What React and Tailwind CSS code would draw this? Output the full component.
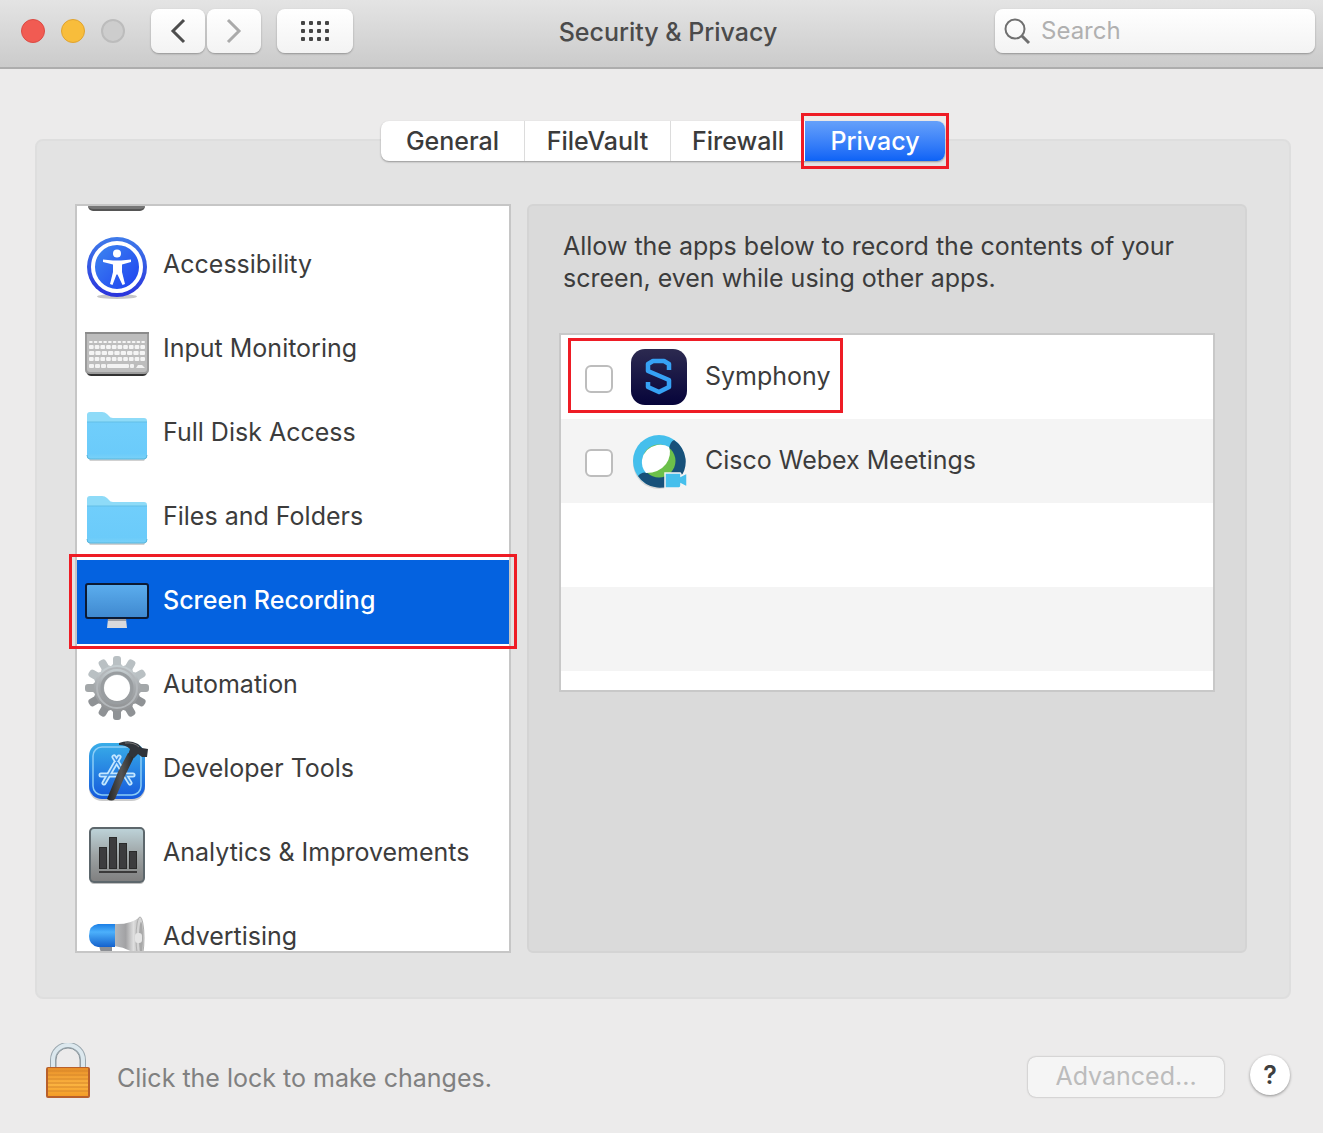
import React from "react";

function AccessibilityIcon() {
  return (
    <svg viewBox="0 0 64 64" className="size-16" aria-hidden="true">
      <defs>
        <linearGradient id="accOuter" x1="0" y1="0" x2="0" y2="1">
          <stop offset="0" stopColor="#3f7bea" />
          <stop offset="1" stopColor="#2a33dc" />
        </linearGradient>
        <linearGradient id="accInner" x1="0" y1="0" x2="1" y2="1">
          <stop offset="0" stopColor="#3f8af0" />
          <stop offset="1" stopColor="#1d3df0" />
        </linearGradient>
      </defs>
      <ellipse cx="32" cy="60.500" rx="20" ry="2.500" fill="#000" opacity=".22" />
      <circle cx="32" cy="31" r="30" fill="url(#accOuter)" />
      <circle cx="32" cy="31" r="24" fill="url(#accInner)" stroke="#fff" strokeWidth="4" />
      <circle cx="32" cy="17.500" r="4" fill="#fff" />
      <path d="M18 23.500 L28 24.500 H36 L46 23.500 V26 L37 28.500 V36 L40 48 L37.500 49 L32.500 38.500 H31.500 L27.500 49 L25 48 L28 36 V28.500 L18 26 Z" fill="#fff" />
    </svg>
  );
}

function KeyboardIcon() {
  const rows = [
    { y: 21, h: 2, keys: 12 },
    { y: 25, h: 4, keys: 10 },
    { y: 31, h: 4, keys: 9 },
    { y: 37, h: 4, keys: 10 },
  ];
  return (
    <svg viewBox="0 0 64 64" className="size-16" aria-hidden="true">
      <path d="M1 49 Q1 56 6 56 H58 Q63 56 63 49Z" fill="#333" />
      <path d="M0 13 H64 V50 Q64 54 59 54 H5 Q0 54 0 50Z" fill="#9c9c9c" />
      <path d="M2 14 H62 V49 Q62 52 59 52 H5 Q2 52 2 49Z" fill="#bdbdbd" />
      <rect x="0" y="12" width="64" height="2" fill="#8b8b8b" />
      {rows.map((r, j) => {
        const w = 57 / r.keys;
        return Array.from({ length: r.keys }, (_, i) => (
          <rect key={j + "-" + i} x={4 + i * w} y={r.y} width={w - 1} height={r.h} rx="1" fill="#f5f5f5" />
        ));
      })}
      {[4, 10, 16].map((x) => (
        <rect key={x} x={x} y="44" width="5" height="4" rx="1" fill="#f2f2f2" />
      ))}
      <rect x="22" y="44" width="22" height="4" rx="1" fill="#f2f2f2" />
      <rect x="45" y="44" width="4" height="4" rx="1" fill="#f2f2f2" />
      <path d="M51 48 L53 45 H57 L60 48Z" fill="#f2f2f2" />
    </svg>
  );
}

function FolderIcon() {
  return (
    <svg viewBox="0 0 64 64" className="size-16" aria-hidden="true">
      <defs>
        <linearGradient id="folder" x1="0" y1="0" x2="0" y2="1">
          <stop offset="0" stopColor="#70cefb" />
          <stop offset=".85" stopColor="#6bcbfa" />
          <stop offset="1" stopColor="#79d1f8" />
        </linearGradient>
      </defs>
      <path d="M3 54 H61 L59 57 H5Z" fill="#000" opacity=".18" />
      <path d="M2 11 Q2 8 5 8 H17 Q20 8 22 10 L24 12 Q25 14 28 14 H59 Q62 14 62 17 V52 H2Z" fill="#8edbf8" />
      <path d="M2 18 H62 V52 Q62 55 59 55 H5 Q2 55 2 52Z" fill="url(#folder)" />
      <path d="M2 18 H62" stroke="#62bee7" />
      <path d="M2 51 Q2 55 5 55 H59 Q62 55 62 51" fill="none" stroke="#58b6dd" />
    </svg>
  );
}

function DisplayIcon() {
  return (
    <svg viewBox="0 0 64 64" className="size-16" aria-hidden="true">
      <defs>
        <linearGradient id="screen" x1="0" y1="0" x2="0" y2="1">
          <stop offset="0" stopColor="#5caeee" />
          <stop offset="1" stopColor="#3f88cf" />
        </linearGradient>
      </defs>
      <path d="M23 47 H41 L42 56 H22Z" fill="#d9d9dc" />
      <path d="M23 47 H41 V49 H23Z" fill="#9a9da5" />
      <rect x="1" y="12" width="62" height="34" rx="2" fill="url(#screen)" stroke="#0c1a33" strokeWidth="2" />
    </svg>
  );
}

function GearIcon() {
  return (
    <svg viewBox="0 0 64 64" className="size-16" aria-hidden="true">
      <defs>
        <linearGradient id="gear" x1="0" y1="0" x2="0" y2="1">
          <stop offset="0" stopColor="#c5cdd0" />
          <stop offset=".4" stopColor="#a9adb0" />
          <stop offset="1" stopColor="#949698" />
        </linearGradient>
      </defs>
      {Array.from({ length: 12 }, (_, i) => (
        <path
          key={i}
          d="M24 13 L28 8 V3 Q28 0 31 0 H33 Q36 0 36 3 V8 L40 13Z"
          fill={i > 3 && i < 9 ? "#8f9295" : i === 3 || i === 9 ? "#a3a7a9" : "#b9c0c3"}
          transform={`rotate(${i * 30} 32 32)`}
        />
      ))}
      <circle cx="32" cy="32" r="18" fill="none" stroke="url(#gear)" strokeWidth="10" />
      <circle cx="32" cy="32" r="15" fill="none" stroke="#999da0" strokeWidth="3" />
      <circle cx="32" cy="32" r="20" fill="none" stroke="#b3b7ba" strokeWidth="2" />
    </svg>
  );
}

function DeveloperIcon() {
  return (
    <svg viewBox="0 0 64 64" className="size-16" aria-hidden="true">
      <defs>
        <linearGradient id="dev" x1="0" y1="0" x2="0" y2="1">
          <stop offset="0" stopColor="#38ade8" />
          <stop offset="1" stopColor="#1559dc" />
        </linearGradient>
        <linearGradient id="handle" x1="0" y1="0" x2="1" y2="0">
          <stop offset="0" stopColor="#222" />
          <stop offset=".5" stopColor="#555" />
          <stop offset="1" stopColor="#222" />
        </linearGradient>
      </defs>
      <rect x="4" y="5" width="56" height="56" rx="13" fill="#000" opacity=".2" />
      <rect x="4" y="3" width="56" height="56" rx="13" fill="url(#dev)" />
      <rect x="8" y="7" width="48" height="48" rx="9" fill="none" stroke="#8ccdf6" strokeWidth="1.500" />
      <g fill="none" stroke="#c4e7ff" strokeLinecap="round">
        <path d="M34 17 L19 43 M29 17 L45 43" strokeWidth="5" />
        <path d="M16 35 H48" strokeWidth="5" />
        <path d="M34 17 L19 43 M29 17 L45 43 M16 35 H48" stroke="#3b8fe5" strokeWidth="1.500" />
      </g>
      <path d="M43 13 L50 15 L39 38 L30 59 Q27 62 22 59 L33 32Z" fill="url(#handle)" />
      <path d="M34 3 Q44 -1 53 4 L57 8 L63 9 L62 17 L57 17 L53 14 L49 18 L43 15 L45 9 Q41 5 34 5Z" fill="#30343a" />
      <path d="M40 3 Q49 2 54 7" stroke="#777" fill="none" />
    </svg>
  );
}

function AnalyticsIcon() {
  return (
    <svg viewBox="0 0 64 64" className="size-16" aria-hidden="true">
      <defs>
        <linearGradient id="ana" x1="0" y1="0" x2="0" y2="1">
          <stop offset="0" stopColor="#bed4da" />
          <stop offset=".5" stopColor="#9da3a4" />
          <stop offset="1" stopColor="#7f7f7f" />
        </linearGradient>
      </defs>
      <rect x="5" y="5" width="54" height="55" rx="4" fill="#000" opacity=".25" />
      <rect x="5" y="4" width="54" height="54" rx="4" fill="url(#ana)" stroke="#5d676c" strokeWidth="2" />
      <g fill="#3c3c3e" stroke="#2a2a2a">
        <rect x="14.500" y="23.500" width="7" height="21" />
        <rect x="24.500" y="13.500" width="7" height="31" />
        <rect x="34.500" y="19.500" width="7" height="25" />
        <rect x="44.500" y="27.500" width="7" height="17" />
      </g>
      <rect x="14" y="47" width="38" height="2" fill="#3a3a3a" />
    </svg>
  );
}

function MegaphoneIcon() {
  return (
    <svg viewBox="0 0 64 64" className="size-16" aria-hidden="true">
      <defs>
        <linearGradient id="mega" x1="0" y1="0" x2="0" y2="1">
          <stop offset="0" stopColor="#1b7fe6" />
          <stop offset=".35" stopColor="#4cb0fb" />
          <stop offset="1" stopColor="#1461cc" />
        </linearGradient>
        <linearGradient id="horn" x1="0" y1="0" x2="1" y2="0">
          <stop offset="0" stopColor="#b8babd" />
          <stop offset=".45" stopColor="#a2a2a4" />
          <stop offset=".75" stopColor="#dedede" />
          <stop offset="1" stopColor="#b5b5b5" />
        </linearGradient>
      </defs>
      <path d="M14 38 H27 V48 H17Z" fill="#8c8f94" />
      <path d="M29 16 Q45 17 55 9 V50 Q45 40 29 38Z" fill="url(#horn)" />
      <ellipse cx="55" cy="30" rx="4" ry="21" fill="#d4d4d4" stroke="#b0b0b0" />
      <ellipse cx="56" cy="30" rx="2" ry="16" fill="#a8a8a8" />
      <rect x="50" y="25" width="7" height="10" rx="3" fill="#e4e4e4" />
      <path d="M30 16 V39 H13 Q4 37 4 28 Q4 17 13 16Z" fill="url(#mega)" />
    </svg>
  );
}

function SymphonyIcon() {
  return (
    <svg viewBox="0 0 56 56" className="size-14" aria-hidden="true">
      <defs>
        <linearGradient id="sym" x1="0" y1="0" x2="0" y2="1">
          <stop offset="0" stopColor="#2c2a50" />
          <stop offset="1" stopColor="#06043a" />
        </linearGradient>
      </defs>
      <rect width="56" height="56" rx="14" fill="url(#sym)" />
      <path
        d="M38 21 V15 L33 12 H22 L17 15 V22 L38 31 V38 L28 43 L17 38 V33"
        fill="none"
        stroke="#36a2f5"
        strokeWidth="4.500"
        strokeLinejoin="round"
      />
    </svg>
  );
}

function WebexIcon() {
  return (
    <svg viewBox="0 0 56 56" className="size-14" aria-hidden="true">
      <circle cx="28" cy="30" r="26" fill="#000" opacity=".12" />
      <circle cx="28" cy="28" r="26" fill="#45bfec" />
      <path d="M43 7 A26 26 0 1 1 7 43 Q11 38 17 40 L38 16 Q39 9 43 7Z" fill="#17517a" />
      <circle cx="28" cy="28" r="16.500" fill="#6cc04a" />
      <path d="M38 14 Q41 22 35 31 Q28 40 15 40 Q10 34 11 27 Q13 15 26 12 Q33 11 38 14Z" fill="#fff" />
      <path d="M34 40 H49 Q50 40 50 43 L56 40 V54 L50 51 Q50 55 48 55 H34Z" fill="#45bfec" stroke="#f4f4f4" strokeWidth="1.500" />
    </svg>
  );
}

function LockIcon() {
  return (
    <svg viewBox="0 0 46 56" className="h-14 w-[46px]" aria-hidden="true">
      <defs>
        <linearGradient id="lock" x1="0" y1="0" x2="0" y2="1">
          <stop offset="0" stopColor="#e88f28" />
          <stop offset=".6" stopColor="#fbb340" />
          <stop offset="1" stopColor="#f39c26" />
        </linearGradient>
      </defs>
      <path d="M8 26 V17 A15 15 0 0 1 38 17 V26" fill="none" stroke="#9aa7ae" strokeWidth="6" />
      <path d="M8 26 V17 A15 15 0 0 1 38 17 V26" fill="none" stroke="#dce8ee" strokeWidth="4" />
      <path d="M11 25 V17 A12 12 0 0 1 35 17 V25" fill="none" stroke="#8d989e" strokeWidth="1" />
      <rect x="1" y="24" width="44" height="31" rx="2" fill="#b9602b" />
      <rect x="3" y="25" width="40" height="28" fill="url(#lock)" />
      {[28, 32, 36, 40, 44, 48].map((y) => (
        <path key={y} d={`M3 ${y} H43`} stroke="#d6862a" strokeWidth="1" />
      ))}
    </svg>
  );
}

const categories = [
  { name: "Accessibility", Icon: AccessibilityIcon },
  { name: "Input Monitoring", Icon: KeyboardIcon },
  { name: "Full Disk Access", Icon: FolderIcon },
  { name: "Files and Folders", Icon: FolderIcon },
  { name: "Screen Recording", Icon: DisplayIcon, selected: true },
  { name: "Automation", Icon: GearIcon },
  { name: "Developer Tools", Icon: DeveloperIcon },
  { name: "Analytics & Improvements", Icon: AnalyticsIcon },
  { name: "Advertising", Icon: MegaphoneIcon },
];

function Highlight({ className }) {
  return <span className={`pointer-events-none absolute z-10 border-3 border-[#ee1c25] ${className}`} />;
}

function TitleBar() {
  const button =
    "flex h-11 items-center justify-center rounded-lg bg-linear-to-b from-white to-[#f3f3f3] shadow-[0_1px_2px_rgba(0,0,0,0.3)]";
  return (
    <header className="grid h-[69px] grid-cols-[1fr_auto_1fr] items-start border-b-2 border-[#adadad] bg-linear-to-b from-[#e4e4e4] to-[#cbcbcb] pt-[9px] pr-2 pl-[21px]">
      <div className="flex items-center">
        <div className="flex gap-4">
          <button aria-label="Close" className="size-6 rounded-full border border-[#dc4a43] bg-[#f15b52]" />
          <button aria-label="Minimize" className="size-6 rounded-full border border-[#e0a32f] bg-[#f8bd3b]" />
          <button aria-label="Zoom" disabled className="size-6 rounded-full border-2 border-[#bcbcbc] bg-[#cdcdcd]" />
        </div>
        <div className="ml-[26px] flex gap-0.5">
          <button aria-label="Back" className={`${button} w-[54px]`}>
            <svg viewBox="0 0 16 26" className="h-[26px] w-4" aria-hidden="true">
              <path d="M14 2 L3 13 L14 24" fill="none" stroke="#4d4d4d" strokeWidth="3" />
            </svg>
          </button>
          <button aria-label="Forward" className={`${button} w-[54px]`}>
            <svg viewBox="0 0 16 26" className="h-[26px] w-4" aria-hidden="true">
              <path d="M2 2 L13 13 L2 24" fill="none" stroke="#aaa" strokeWidth="3" />
            </svg>
          </button>
        </div>
        <button aria-label="Show All" className={`${button} ml-4 w-[76px]`}>
          <svg viewBox="0 0 28 20" className="h-5 w-7" fill="#454545" aria-hidden="true">
            {[0, 8, 16].map((y) => [0, 8, 16, 24].map((x) => <rect key={x + "," + y} x={x} y={y} width="4" height="4" rx="1" />))}
          </svg>
        </button>
      </div>
      <h1 className="text-[25px] leading-[46px] font-medium text-[#4b4b4b]">Security &amp; Privacy</h1>
      <label className={`${button} ml-auto w-80 gap-2.5 pl-2`}>
        <svg viewBox="0 0 28 28" className="size-7 shrink-0" fill="none" stroke="#6f6f6f" strokeWidth="2" aria-hidden="true">
          <circle cx="12" cy="12" r="9.500" />
          <path d="M19 19 L26 26" strokeWidth="3" />
        </svg>
        <input
          type="search"
          aria-label="Search"
          placeholder="Search"
          className="min-w-0 flex-1 bg-transparent text-2xl text-[#444] outline-none placeholder:text-[#b0b0b0]"
        />
      </label>
    </header>
  );
}

function Tabs() {
  const tab = "h-10 border-r border-[#dcdcdc]";
  return (
    <nav className="relative mx-auto -mt-5 flex w-fit rounded-lg bg-white text-[25px] leading-[38px] font-medium text-[#3b3b3b] shadow-[0_1px_2px_rgba(0,0,0,0.35)]">
      <button className={`${tab} w-36`}>General</button>
      <button className={`${tab} w-[146px]`}>FileVault</button>
      <button className="h-10 w-[134px]">Firewall</button>
      <button className="relative h-10 w-[140px] rounded-r-lg bg-linear-to-b from-[#65a0fa] to-[#0b62f6] text-white">
        Privacy
        <Highlight className="-inset-x-[4px] -inset-y-2" />
      </button>
    </nav>
  );
}

function CategoryList() {
  return (
    <div className="relative w-[436px] shrink-0">
      <ul className="h-[749px] overflow-hidden border-2 border-[#c6c6c6] bg-white">
        <li className="h-[18px] pl-[11px]">
          <div className="h-[5px] w-[57px] rounded-b-lg border-b-2 border-[#555] bg-[#777]" />
        </li>
        {categories.map(({ name, Icon, selected }) => (
          <li key={name}>
            <button
              className={`flex h-21 w-full items-start gap-3.5 pl-2 text-left ${
                selected ? "bg-[#0462e0] font-medium text-white" : "text-[#3c3c3c]"
              }`}
            >
              <span className="pt-3">
                <Icon />
              </span>
              <span className="text-[25px] leading-20 whitespace-nowrap">{name}</span>
            </button>
          </li>
        ))}
      </ul>
      <Highlight className="-inset-x-[6px] top-[350px] h-[95px]" />
    </div>
  );
}

function AppRow({ name, Icon, highlighted }) {
  return (
    <li className="relative h-21 even:bg-[#f4f4f4]">
      {name && (
        <label className="flex h-full items-center pl-6">
          <input type="checkbox" className="mt-1 size-7 appearance-none rounded-md border-2 border-[#bdbdbd] bg-white" />
          <span className="mx-[18px]">
            <Icon />
          </span>
          <span className="text-[25px]">{name}</span>
        </label>
      )}
      {highlighted && <Highlight className="top-[3px] left-[7px] h-[75px] w-[275px]" />}
    </li>
  );
}

function PermissionPanel() {
  return (
    <section className="min-w-0 flex-1 rounded-md border-2 border-[#d4d4d4] bg-[#dadada] px-[30px] pt-6 text-[#3c3c3c]">
      <p className="px-1 text-[25px] leading-8">
        Allow the apps below to record the contents of your screen, even while using other apps.
      </p>
      <ul className="mt-[39px] h-[359px] overflow-hidden border-2 border-[#c8c8c8] bg-white">
        <AppRow name="Symphony" Icon={SymphonyIcon} highlighted />
        <AppRow name="Cisco Webex Meetings" Icon={WebexIcon} />
        <AppRow />
        <AppRow />
        <AppRow />
      </ul>
    </section>
  );
}

export default function App() {
  return (
    <div className="min-h-screen bg-[#ecebeb] font-['Inter','Liberation_Sans',sans-serif]">
      <TitleBar />
      <main className="mt-[70px] mr-8 ml-[35px] rounded-lg border-2 border-[#dedede] bg-[#e3e3e3] pb-11">
        <Tabs />
        <div className="mt-[43px] mr-[42px] ml-[38px] flex gap-4">
          <CategoryList />
          <PermissionPanel />
        </div>
      </main>
      <footer className="flex items-center pt-11 pr-[33px] pl-[45px] text-[25px]">
        <button aria-label="Unlock settings">
          <LockIcon />
        </button>
        <p className="ml-[26px] pt-4 text-[#808080]">Click the lock to make changes.</p>
        <button
          disabled
          className="mt-3 ml-auto h-10 w-[196px] rounded-lg bg-[#f5f5f5] text-[#bcbcbc] shadow-[0_0_2px_rgba(0,0,0,0.35)]"
        >
          Advanced...
        </button>
        <button
          aria-label="Help"
          className="mt-2 ml-[26px] size-10 rounded-full bg-white leading-10 font-semibold text-[#3f3f3f] shadow-[0_1px_3px_rgba(0,0,0,0.4)]"
        >
          ?
        </button>
      </footer>
    </div>
  );
}
